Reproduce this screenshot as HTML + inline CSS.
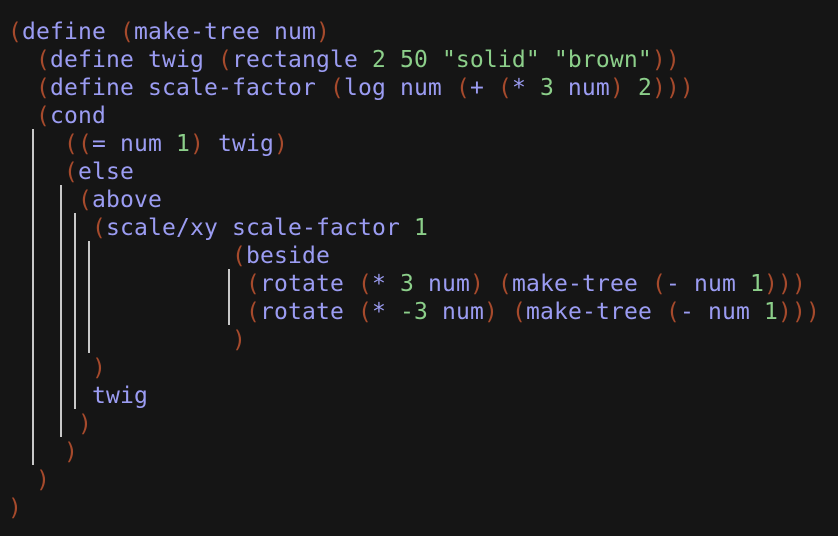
<!DOCTYPE html>
<html><head><style>
body{margin:0;width:838px;height:536px;background:#151515;overflow:hidden;position:relative;font-family:"DejaVu Sans Mono","Liberation Mono",monospace;}
.l{position:absolute;left:0;height:28px;line-height:28px;font-size:23px;letter-spacing:0.15px;color:#9b9cf2;white-space:pre;top:0;margin-top:1px}
.p{color:#a64a2c}.g{color:#8ccf8a}
.b{position:absolute;width:2px;background:#c8c8c8}
</style></head><body>
<div class="l" style="top:17px;left:8px"><span class="p">(</span>define <span class="p">(</span>make-tree num<span class="p">)</span></div>
<div class="l" style="top:45px;left:36px"><span class="p">(</span>define twig <span class="p">(</span>rectangle <span class="g">2 50 "solid" "brown"</span><span class="p">))</span></div>
<div class="l" style="top:73px;left:36px"><span class="p">(</span>define scale-factor <span class="p">(</span>log num <span class="p">(</span>+ <span class="p">(</span>* <span class="g">3</span> num<span class="p">)</span> <span class="g">2</span><span class="p">)))</span></div>
<div class="l" style="top:101px;left:36px"><span class="p">(</span>cond</div>
<div class="l" style="top:129px;left:64px"><span class="p">((</span>= num <span class="g">1</span><span class="p">)</span> twig<span class="p">)</span></div>
<div class="l" style="top:157px;left:64px"><span class="p">(</span>else</div>
<div class="l" style="top:185px;left:78px"><span class="p">(</span>above</div>
<div class="l" style="top:213px;left:92px"><span class="p">(</span>scale/xy scale-factor <span class="g">1</span></div>
<div class="l" style="top:241px;left:232px"><span class="p">(</span>beside</div>
<div class="l" style="top:269px;left:246px"><span class="p">(</span>rotate <span class="p">(</span>* <span class="g">3</span> num<span class="p">)</span> <span class="p">(</span>make-tree <span class="p">(</span>- num <span class="g">1</span><span class="p">)))</span></div>
<div class="l" style="top:297px;left:246px"><span class="p">(</span>rotate <span class="p">(</span>* <span class="g">-3</span> num<span class="p">)</span> <span class="p">(</span>make-tree <span class="p">(</span>- num <span class="g">1</span><span class="p">)))</span></div>
<div class="l" style="top:325px;left:232px"><span class="p">)</span></div>
<div class="l" style="top:353px;left:92px"><span class="p">)</span></div>
<div class="l" style="top:381px;left:92px">twig</div>
<div class="l" style="top:409px;left:78px"><span class="p">)</span></div>
<div class="l" style="top:437px;left:64px"><span class="p">)</span></div>
<div class="l" style="top:465px;left:36px"><span class="p">)</span></div>
<div class="l" style="top:493px;left:8px"><span class="p">)</span></div>
<div class="b" style="left:32px;top:129px;height:336px"></div>
<div class="b" style="left:60px;top:185px;height:252px"></div>
<div class="b" style="left:74px;top:213px;height:196px"></div>
<div class="b" style="left:88px;top:241px;height:112px"></div>
<div class="b" style="left:228px;top:269px;height:56px"></div>
</body></html>
